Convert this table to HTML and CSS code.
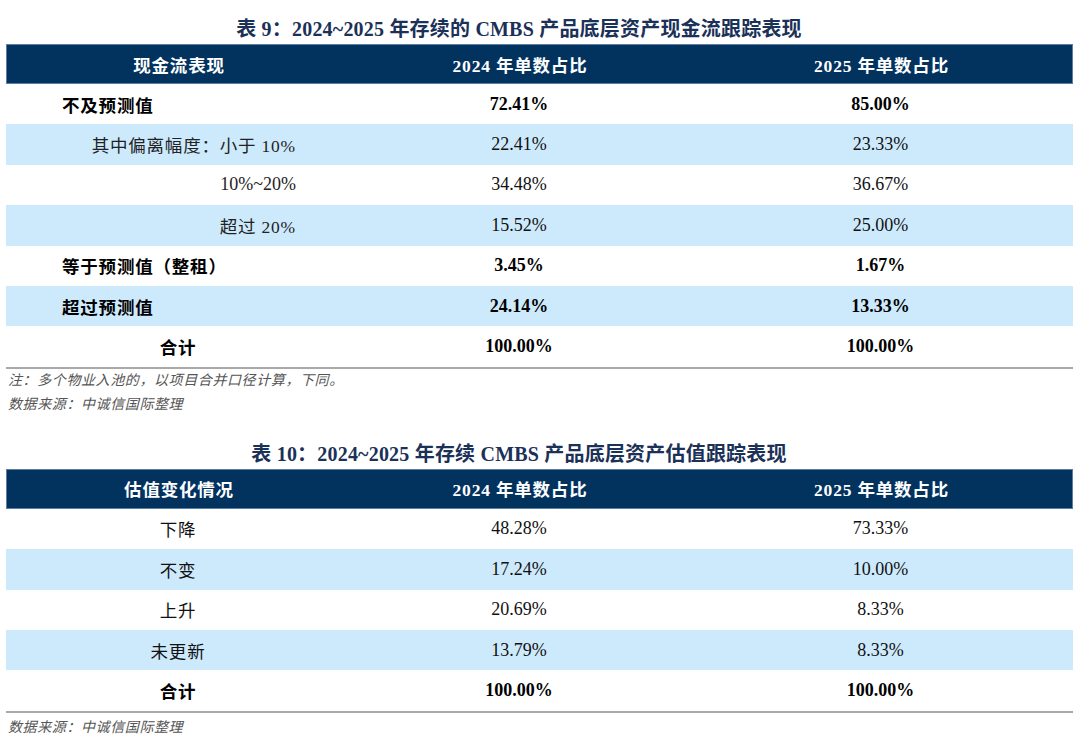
FILE: index.html
```html
<!DOCTYPE html>
<html lang="zh-CN">
<head>
<meta charset="utf-8">
<title>CMBS 跟踪表现</title>
<link rel="stylesheet" href="styles.css">
</head>
<body>
<div class="page">
  <h2 class="caption">表 9：2024~2025 年存续的 CMBS 产品底层资产现金流跟踪表现</h2>
  <div class="tbl">
    <div class="row head"><div class="cell">现金流表现</div><div class="cell">2024 年单数占比</div><div class="cell">2025 年单数占比</div></div>
    <div class="row bold"><div class="cell left">不及预测值</div><div class="cell num">72.41%</div><div class="cell num">85.00%</div></div>
    <div class="row alt"><div class="cell right">其中偏离幅度：小于 10%</div><div class="cell num">22.41%</div><div class="cell num">23.33%</div></div>
    <div class="row"><div class="cell right"><span class="lat">10%~20%</span></div><div class="cell num">34.48%</div><div class="cell num">36.67%</div></div>
    <div class="row alt"><div class="cell right">超过 20%</div><div class="cell num">15.52%</div><div class="cell num">25.00%</div></div>
    <div class="row bold"><div class="cell left">等于预测值（整租）</div><div class="cell num">3.45%</div><div class="cell num">1.67%</div></div>
    <div class="row alt bold"><div class="cell left">超过预测值</div><div class="cell num">24.14%</div><div class="cell num">13.33%</div></div>
    <div class="row bold last"><div class="cell">合计</div><div class="cell num">100.00%</div><div class="cell num">100.00%</div></div>
  </div>
  <p class="note">注：多个物业入池的，以项目合并口径计算，下同。</p>
  <p class="note">数据来源：中诚信国际整理</p>

  <h2 class="caption second">表 10：2024~2025 年存续 CMBS 产品底层资产估值跟踪表现</h2>
  <div class="tbl">
    <div class="row head"><div class="cell">估值变化情况</div><div class="cell">2024 年单数占比</div><div class="cell">2025 年单数占比</div></div>
    <div class="row"><div class="cell">下降</div><div class="cell num">48.28%</div><div class="cell num">73.33%</div></div>
    <div class="row alt"><div class="cell">不变</div><div class="cell num">17.24%</div><div class="cell num">10.00%</div></div>
    <div class="row"><div class="cell">上升</div><div class="cell num">20.69%</div><div class="cell num">8.33%</div></div>
    <div class="row alt"><div class="cell">未更新</div><div class="cell num">13.79%</div><div class="cell num">8.33%</div></div>
    <div class="row bold last"><div class="cell">合计</div><div class="cell num">100.00%</div><div class="cell num">100.00%</div></div>
  </div>
  <p class="note src">数据来源：中诚信国际整理</p>
</div>
</body>
</html>
```

FILE: styles.css
```css
html, body {
  margin: 0;
  padding: 0;
  background: #ffffff;
}

body {
  font-family: "Liberation Serif", "Noto Sans CJK SC", serif;
  color: #111111;
}

.page {
  width: 1067px;
  padding: 17px 7px 0 6px;
}

.caption {
  margin: 0 0 3px 0;
  padding-right: 41px;
  text-align: center;
  font-size: 20px;
  line-height: 24px;
  font-weight: bold;
  color: #1b3157;
  letter-spacing: 0.2px;
}

.caption.second {
  margin-top: 25px;
}

.tbl {
  display: flex;
  flex-direction: column;
}

.row {
  display: grid;
  grid-template-columns: 344px 338px 385px;
  height: 40.4px;
  align-items: center;
  font-size: 17.5px;
}

.row.head {
  height: 40px;
  box-sizing: border-box;
  background: #02335f;
  color: #ffffff;
  font-weight: bold;
  border: 1px solid #5d7ea3;
}

.row.alt {
  background: #cdeafd;
}

.row.bold {
  font-weight: bold;
  color: #000000;
}

.row.last {
  border-bottom: 2px solid #a9a9a9;
}

.cell {
  text-align: center;
  letter-spacing: 0.8px;
  white-space: nowrap;
}

.cell.num {
  font-size: 18px;
  letter-spacing: 0;
}

.lat {
  letter-spacing: 0;
  font-size: 18px;
}

.cell.left {
  text-align: left;
  padding-left: 56px;
}

.cell.right {
  text-align: right;
  padding-right: 54px;
  color: #222222;
}

.note {
  margin: 0;
  font-size: 14px;
  line-height: 24px;
  font-style: italic;
  color: #555555;
  letter-spacing: 0.6px;
  padding-left: 2px;
}

.note.src {
  margin-top: 3px;
}
```
